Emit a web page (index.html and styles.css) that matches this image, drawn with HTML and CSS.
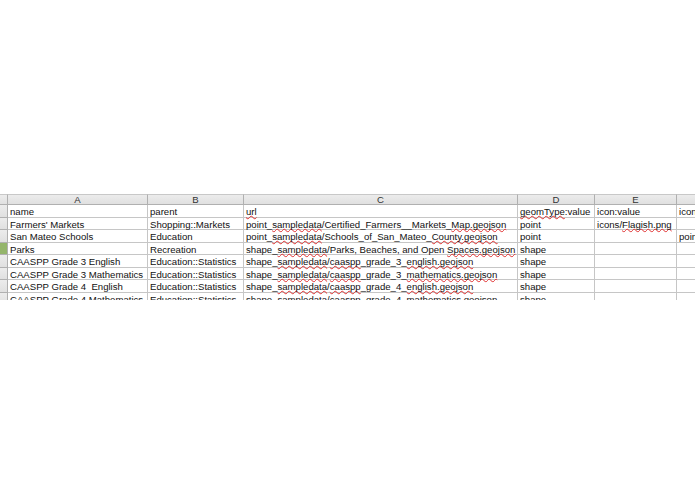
FILE: index.html
```html
<!DOCTYPE html>
<html lang="en">
	<head>
		<meta charset="UTF-8" />
		<title>Sheet</title>
		<link rel="stylesheet" href="styles.css">
	</head>
	<body>
		<div class="viewport">
			<div class="sheet">
				<div class="corner"></div>
				<div class="col-head">A</div>
				<div class="col-head">B</div>
				<div class="col-head">C</div>
				<div class="col-head">D</div>
				<div class="col-head">E</div>
				<div class="col-head"></div>

				<div class="row-head"></div>
				<div class="cell">name</div>
				<div class="cell">parent</div>
				<div class="cell"><span class="typo">url</span></div>
				<div class="cell"><span class="typo">geomType</span>:value</div>
				<div class="cell">icon:value</div>
				<div class="cell">icon:value</div>

				<div class="row-head"></div>
				<div class="cell">Farmers' Markets</div>
				<div class="cell">Shopping::Markets</div>
				<div class="cell">point_<span class="typo">sampledata</span>/Certified_Farmers__Markets_<span class="typo">Map.geojson</span></div>
				<div class="cell">point</div>
				<div class="cell">icons/<span class="typo">Flagish.png</span></div>
				<div class="cell"></div>

				<div class="row-head"></div>
				<div class="cell">San Mateo Schools</div>
				<div class="cell">Education</div>
				<div class="cell">point_<span class="typo">sampledata</span>/Schools_of_San_Mateo_<span class="typo">County.geojson</span></div>
				<div class="cell">point</div>
				<div class="cell"></div>
				<div class="cell">point</div>

				<div class="row-head active"></div>
				<div class="cell">Parks</div>
				<div class="cell">Recreation</div>
				<div class="cell">shape_<span class="typo">sampledata</span>/Parks, Beaches, and Open <span class="typo">Spaces.geojson</span></div>
				<div class="cell">shape</div>
				<div class="cell"></div>
				<div class="cell"></div>

				<div class="row-head"></div>
				<div class="cell">CAASPP Grade 3 English</div>
				<div class="cell">Education::Statistics</div>
				<div class="cell">shape_<span class="typo">sampledata</span>/<span class="typo">caaspp</span>_grade_3_<span class="typo">english.geojson</span></div>
				<div class="cell">shape</div>
				<div class="cell"></div>
				<div class="cell"></div>

				<div class="row-head"></div>
				<div class="cell">CAASPP Grade 3 Mathematics</div>
				<div class="cell">Education::Statistics</div>
				<div class="cell">shape_<span class="typo">sampledata</span>/<span class="typo">caaspp</span>_grade_3_<span class="typo">mathematics.geojson</span></div>
				<div class="cell">shape</div>
				<div class="cell"></div>
				<div class="cell"></div>

				<div class="row-head"></div>
				<div class="cell">CAASPP Grade 4&nbsp; English</div>
				<div class="cell">Education::Statistics</div>
				<div class="cell">shape_<span class="typo">sampledata</span>/<span class="typo">caaspp</span>_grade_4_<span class="typo">english.geojson</span></div>
				<div class="cell">shape</div>
				<div class="cell"></div>
				<div class="cell"></div>

				<div class="row-head"></div>
				<div class="cell">CAASPP Grade 4 Mathematics</div>
				<div class="cell">Education::Statistics</div>
				<div class="cell">shape_<span class="typo">sampledata</span>/<span class="typo">caaspp</span>_grade_4_<span class="typo">mathematics.geojson</span></div>
				<div class="cell">shape</div>
				<div class="cell"></div>
				<div class="cell"></div>
			</div>
		</div>
	</body>
</html>
```

FILE: styles.css
```css
html, body {
	margin: 0;
	padding: 0;
	background: #fff;
	font-family: "Liberation Sans", Arial, sans-serif;
}

.viewport {
	margin-top: 194px;
	height: 106px;
	width: 695px;
	overflow: hidden;
}

.sheet {
	display: grid;
	grid-template-columns: 8px 140px 96px 274px 77px 82px 80px;
	grid-template-rows: 11px;
	grid-auto-rows: 12.5px;
	font-size: 9.6px;
	color: #111;
}

.corner,
.col-head,
.row-head {
	background: linear-gradient(#ececec, #e0e0e0);
	border-right: 1px solid #b0b0b0;
	border-bottom: 1px solid #b0b0b0;
}

.corner,
.col-head {
	border-top: 1px solid #c8c8c8;
}

.col-head {
	text-align: center;
	color: #333;
	line-height: 10px;
	font-size: 9.6px;
}

.row-head.active {
	background: #94b56b;
}

.cell {
	border-right: 1px solid #c6c6c6;
	border-bottom: 1px solid #c6c6c6;
	padding: 1px 2px 0;
	white-space: nowrap;
	overflow-x: clip;
	overflow-y: visible;
	line-height: 11px;
}

.typo {
	text-decoration: underline wavy #e03030;
	text-decoration-thickness: 1px;
	text-underline-offset: 0;
	text-decoration-skip-ink: none;
}
```
